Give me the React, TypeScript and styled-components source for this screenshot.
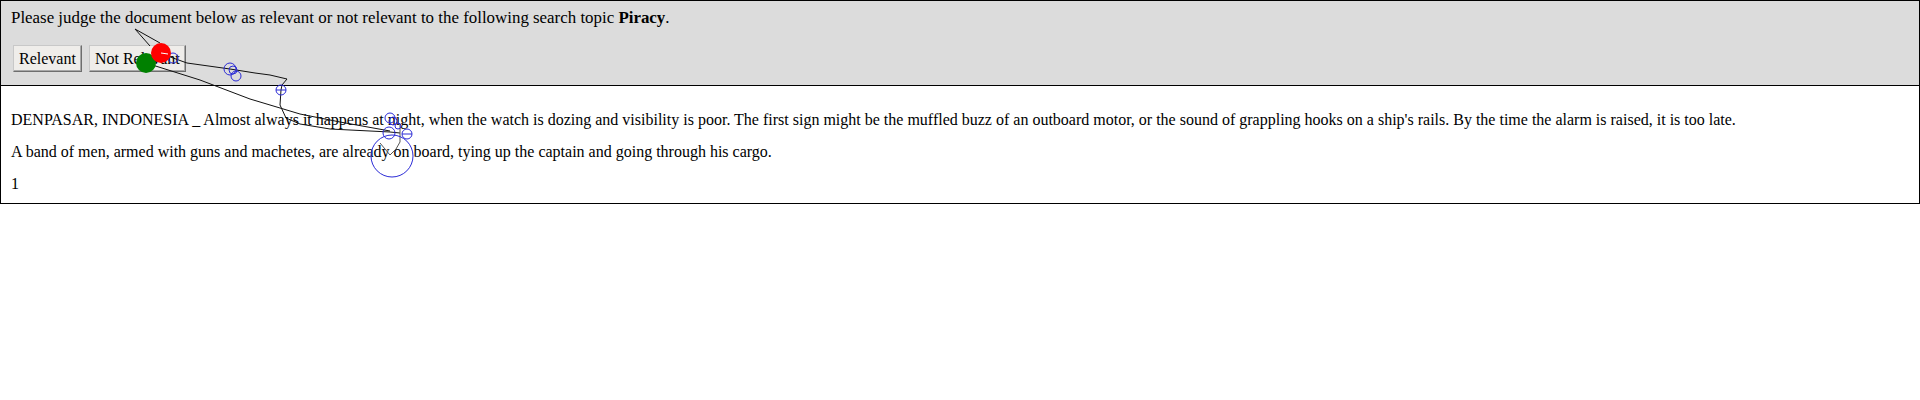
import React from "react";
import styled, { createGlobalStyle } from "styled-components";

const GlobalStyle = createGlobalStyle`
  body {
    margin: 0;
    font-family: "Liberation Serif", "Times New Roman", serif;
    font-size: 16px;
    color: #000;
    background: #fff;
  }
`;

const Page = styled.div`
  position: relative;
`;

const Header = styled.div`
  background: #dcdcdc;
  border: 1px solid #000;
  padding: 8px 10px 13px;
`;

const Prompt = styled.div`
  font-size: 16.9px;
  line-height: 18px;
`;

const ButtonRow = styled.div`
  display: flex;
  gap: 3px;
  margin-top: 18px;
`;

const JudgeButton = styled.button`
  font-family: "Liberation Serif", "Times New Roman", serif;
  font-size: 16px;
  height: 27px;
  padding: 0 5px;
  margin: 0 2px;
  background: #efedea;
  color: #000;
  border: 1px solid;
  border-color: #c8c8c8 #6e6e6e #6e6e6e #c8c8c8;
  box-shadow: inset -1px -1px 0 #a8a8a8;
`;

const Document = styled.div`
  border: 1px solid #000;
  border-top: none;
  padding: 10px 10px 0;
  font-size: 16px;
`;

const Para = styled.p<{ $last?: boolean }>`
  margin: 16px 0 ${(p) => (p.$last ? "11px" : "16px")};
  line-height: 16px;
`;

const Trail = styled.svg`
  position: absolute;
  left: 0;
  top: 0;
  pointer-events: none;
  overflow: visible;
`;

type Fix = { x: number; y: number; r: number; tick?: boolean };

const fixations: Fix[] = [
  { x: 173, y: 58, r: 5 },
  { x: 230, y: 69, r: 6 },
  { x: 233, y: 70, r: 4 },
  { x: 236, y: 76, r: 5 },
  { x: 281, y: 90, r: 5, tick: true },
  { x: 390, y: 118, r: 5 },
  { x: 393, y: 121, r: 4 },
  { x: 398, y: 126, r: 3 },
  { x: 389, y: 133, r: 6 },
  { x: 407, y: 134, r: 5, tick: true },
  { x: 392, y: 156, r: 21 },
];

const MouseTrail: React.FC = () => (
  <Trail width="460" height="190" viewBox="0 0 460 190">
    <g fill="none" stroke="#111" strokeWidth="1">
      <path d="M150 46 L135 29 L160 43" />
      <path d="M161 53 L173 58 L187 63 L230 69 L255 73 L270 75 L287 79 L282 85 L281 90 L280 105 L286 118 L300 124 L330 129 L390 132 L400 133" />
      <path d="M146 63 L200 80 L250 99 L300 114 L340 122 L390 131" />
      <path d="M400 124 L400 142 L396 149 L390 155 L380 143" stroke="#555" />
    </g>
    <g fill="none" stroke="#2b2bd6" strokeWidth="1">
      {fixations.map((f, i) => (
        <g key={i}>
          <circle cx={f.x} cy={f.y} r={f.r} />
          {f.tick && <line x1={f.x - f.r} y1={f.y} x2={f.x + f.r} y2={f.y} />}
        </g>
      ))}
    </g>
    <circle cx="146" cy="63" r="10" fill="#008000" />
    <circle cx="161" cy="53" r="10" fill="#ff0000" />
    <line x1="161" y1="53" x2="168" y2="54" stroke="#fff" strokeWidth="1" />
  </Trail>
);

const App: React.FC = () => {
  return (
    <Page>
      <GlobalStyle />
      <Header>
        <Prompt>
          Please judge the document below as relevant or not relevant to the
          following search topic <b>Piracy</b>.
        </Prompt>
        <ButtonRow>
          <JudgeButton>Relevant</JudgeButton>
          <JudgeButton>Not Relevant</JudgeButton>
        </ButtonRow>
      </Header>
      <Document>
        <Para>
          DENPASAR, INDONESIA _ Almost always it happens at night, when the
          watch is dozing and visibility is poor. The first sign might be the
          muffled buzz of an outboard motor, or the sound of grappling hooks on
          a ship's rails. By the time the alarm is raised, it is too late.
        </Para>
        <Para>
          A band of men, armed with guns and machetes, are already on board,
          tying up the captain and going through his cargo.
        </Para>
        <Para $last>1</Para>
      </Document>
      <MouseTrail />
    </Page>
  );
};

export default App;
